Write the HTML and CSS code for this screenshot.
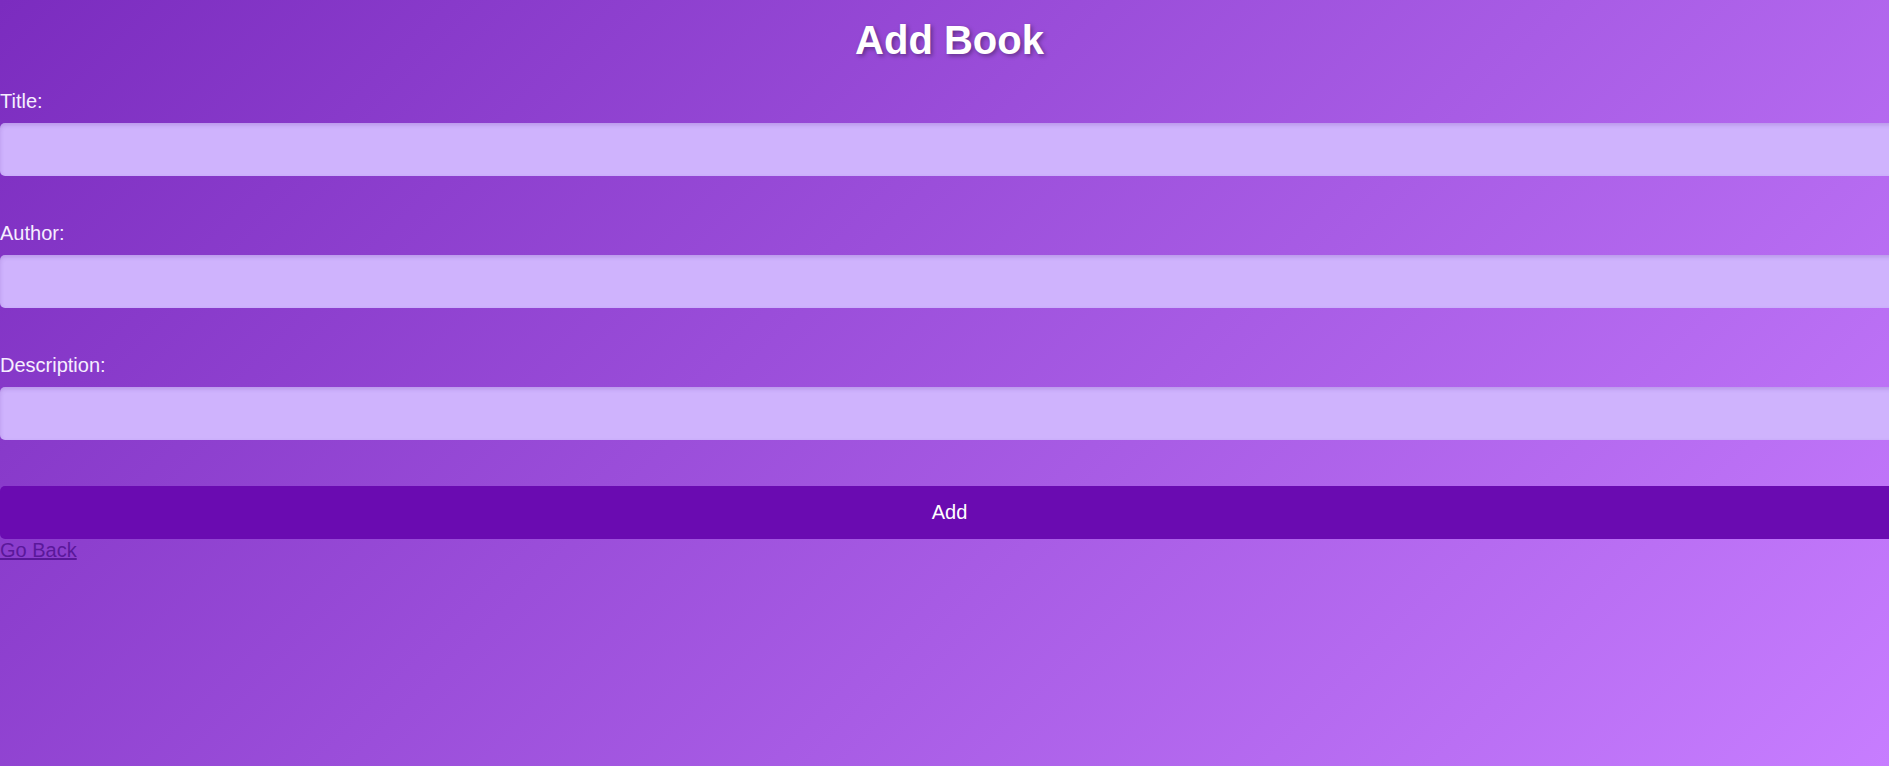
FILE: index.html
```html
<!DOCTYPE html>
<html lang="en">
<head>
<meta charset="utf-8">
<title>Add Book</title>
<link rel="stylesheet" href="styles.css">
</head>
<body>
  <div class="page">
    <h1 class="page-title">Add Book</h1>
    <form class="book-form">
      <div class="field">
        <label class="field-label" for="title">Title:</label>
        <input class="field-input" id="title" type="text">
      </div>
      <div class="field">
        <label class="field-label" for="author">Author:</label>
        <input class="field-input" id="author" type="text">
      </div>
      <div class="field">
        <label class="field-label" for="description">Description:</label>
        <input class="field-input" id="description" type="text">
      </div>
      <button class="submit-btn" type="button">Add</button>
    </form>
    <a class="back-link" href="#">Go Back</a>
  </div>
</body>
</html>
```

FILE: styles.css
```css
html, body {
  margin: 0;
  padding: 0;
  min-height: 100%;
}

body {
  font-family: "Liberation Sans", Arial, sans-serif;
  font-size: 20px;
  color: #fff;
  background: linear-gradient(135deg, #7b2cbf 0%, #c77dff 100%);
  min-height: 766px;
  overflow: hidden;
}

.page {
  width: calc(100% + 10px);
}

.page-title {
  margin: 18px 0 27px;
  font-size: 40px;
  font-weight: bold;
  text-align: center;
  color: #fff;
  text-shadow: 2px 2px 4px rgba(0, 0, 0, 0.35);
}

.book-form {
  display: flex;
  flex-direction: column;
}

.field {
  display: flex;
  flex-direction: column;
  margin-bottom: 46px;
}

.field-label {
  display: block;
  color: #f6eeff;
  margin-bottom: 10px;
}

.field-input {
  display: block;
  box-sizing: border-box;
  width: 100%;
  height: 53px;
  padding: 15px;
  border: none;
  border-radius: 5px;
  background: #cfb3fd;
  box-shadow: inset 0 2px 4px rgba(80, 20, 140, 0.18);
  font: inherit;
  outline: none;
}

.submit-btn {
  display: block;
  box-sizing: border-box;
  width: 100%;
  height: 53px;
  padding: 15px;
  border: none;
  border-radius: 5px;
  background: #6a0bb1;
  color: #fff;
  font: inherit;
  cursor: pointer;
}

.back-link {
  color: #5a189a;
  text-decoration: underline;
}
```
